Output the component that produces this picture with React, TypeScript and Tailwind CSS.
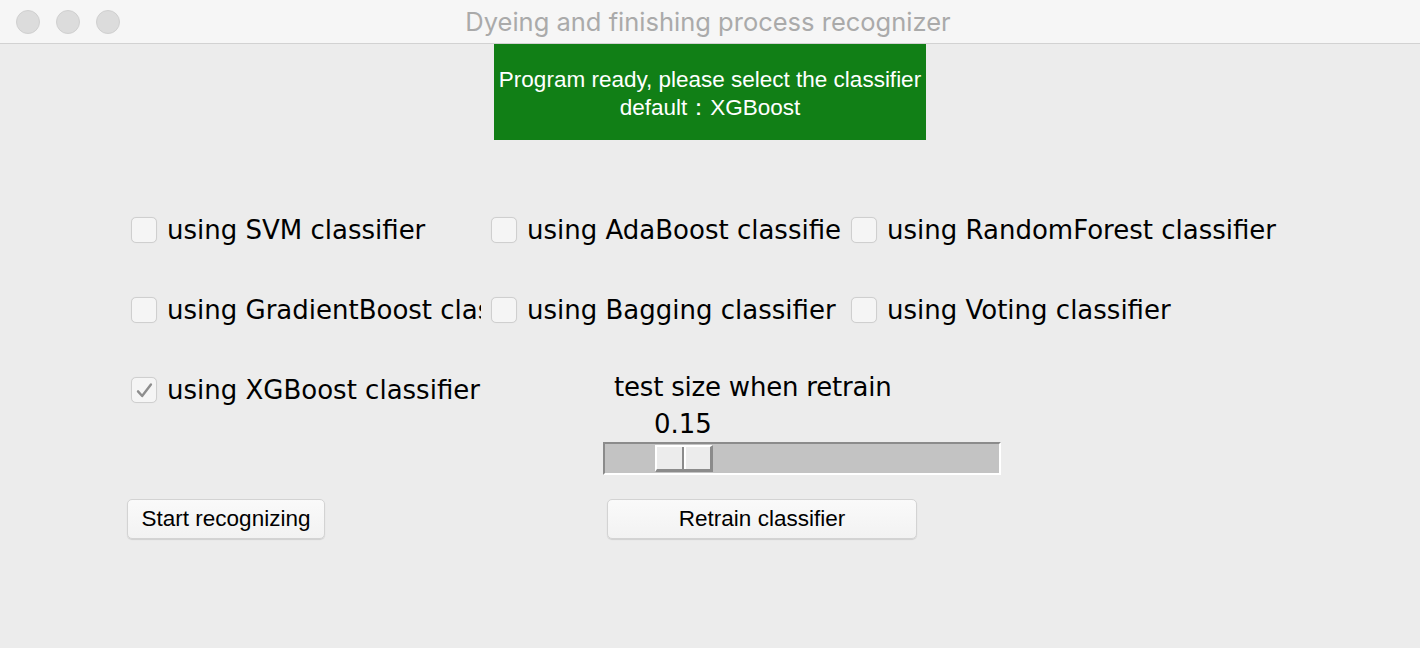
import React from "react";

const classifiers = [
  { label: "using SVM classifier", checked: false, clip: true },
  { label: "using AdaBoost classifier", checked: false, clip: true },
  { label: "using RandomForest classifier", checked: false, clip: false },
  { label: "using GradientBoost classifier", checked: false, clip: true },
  { label: "using Bagging classifier", checked: false, clip: true },
  { label: "using Voting classifier", checked: false, clip: false },
];

function CheckBox({ label, checked, clip }: { label: string; checked: boolean; clip: boolean }) {
  return (
    <div className="flex items-center h-[26px] pl-[4px] whitespace-nowrap">
      <div className="flex-shrink-0 w-[26px] h-[26px] rounded-[5px] border border-[#cfcfcf] bg-[#f5f5f5] shadow-[0_0_1px_rgba(0,0,0,0.08)] flex items-center justify-center">
        {checked && (
          <svg width="26" height="26" viewBox="0 0 26 26" fill="none">
            <path d="M6.5 14.5 L11 19.5 L20.5 7" stroke="#8d8d8d" strokeWidth="2.6" strokeLinecap="round" strokeLinejoin="round" />
          </svg>
        )}
      </div>
      <span
        className={`ml-[10px] text-[26px] leading-[30px] text-black ${clip ? "w-[314px] overflow-hidden" : ""}`}
        style={{ fontFamily: '"DejaVu Sans", sans-serif' }}
      >
        {label}
      </span>
    </div>
  );
}

function Button({ children, width }: { children: React.ReactNode; width: string }) {
  return (
    <button
      className={`${width} h-[40px] rounded-[5px] border border-[#d3d3d3] bg-gradient-to-b from-[#fafafa] to-[#f2f2f2] shadow-[0_1px_1px_rgba(0,0,0,0.12)] text-[22.5px] text-black flex items-center justify-center`}
      style={{ fontFamily: '"Liberation Sans", Arial, sans-serif' }}
    >
      {children}
    </button>
  );
}

export default function App() {
  return (
    <div className="w-[1420px] h-[648px] bg-[#ececec] flex flex-col overflow-hidden">
      {/* title bar */}
      <div className="h-[44px] flex-shrink-0 bg-[#f6f6f6] border-b border-[#d2d2d2] grid grid-cols-[1fr_auto_1fr] items-center">
        <div className="flex items-center gap-[16px] pl-[16px]">
          <div className="w-[24px] h-[24px] rounded-full bg-[#dcdcdc] border border-[#d0d0d0]" />
          <div className="w-[24px] h-[24px] rounded-full bg-[#dcdcdc] border border-[#d0d0d0]" />
          <div className="w-[24px] h-[24px] rounded-full bg-[#dcdcdc] border border-[#d0d0d0]" />
        </div>
        <div className="text-[25.5px] text-[#aaaaaa] pr-[4px] pt-[2px]" style={{ fontFamily: "Inter, sans-serif" }}>
          Dyeing and finishing process recognizer
        </div>
        <div />
      </div>

      {/* status banner */}
      <div
        className="mx-auto w-[432px] h-[96px] pt-[4px] bg-[#117f16] flex flex-col items-center justify-center text-white text-[22.5px] leading-[28px]"
        style={{ fontFamily: '"Liberation Sans", Arial, sans-serif' }}
      >
        <div>Program ready, please select the classifier</div>
        <div>default：XGBoost</div>
      </div>

      <div className="pl-[127px] mt-[77px]">
        {/* classifier options */}
        <div className="grid grid-cols-[360px_360px_auto] gap-y-[54px]">
          {classifiers.map((c) => (
            <CheckBox key={c.label} label={c.label} checked={c.checked} clip={c.clip} />
          ))}
        </div>

        {/* xgboost + test size slider */}
        <div className="flex items-start mt-[50px]">
          <div className="w-[360px] mt-[4px]">
            <CheckBox label="using XGBoost classifier" checked clip={false} />
          </div>
          <div className="ml-[116px] -mt-[1px] flex flex-col" style={{ fontFamily: '"DejaVu Sans", sans-serif' }}>
            <div className="pl-[11px] text-[26px] leading-[30px] text-black tracking-[-0.2px]">test size when retrain</div>
            <div className="pl-[51px] mt-[7px] text-[26px] leading-[30px] text-black">0.15</div>
            <div className="mt-[3px] w-[398px] h-[33px] bg-[#c3c3c3] border-t-2 border-l-2 border-[#8b8b8b] border-b-2 border-r-2 border-b-white border-r-white flex items-center">
              <div className="ml-[50px] w-[58px] h-[27px] flex border-t-2 border-l-2 border-white border-b-[3px] border-r-[3px] border-b-[#8b8b8b] border-r-[#8b8b8b] bg-[#ececec]">
                <div className="flex-1" />
                <div className="w-[2px] bg-[#8b8b8b]" />
                <div className="w-[2px] bg-white" />
                <div className="flex-1" />
              </div>
            </div>
          </div>
        </div>

        {/* actions */}
        <div className="flex mt-[24px]">
          <Button width="w-[198px]">Start recognizing</Button>
          <div className="ml-[282px]">
            <Button width="w-[310px]">Retrain classifier</Button>
          </div>
        </div>
      </div>
    </div>
  );
}
